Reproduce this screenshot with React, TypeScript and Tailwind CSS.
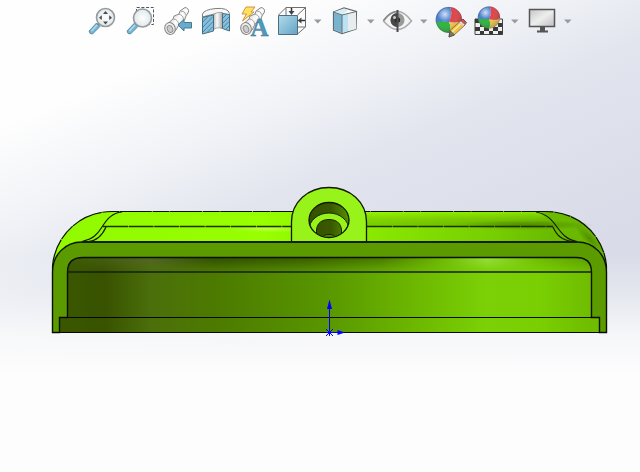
import React from 'react';

type ToolProps = { label: string; children: React.ReactNode };

/* Toolbar glyphs share a 38 by 38 drawing area. */
function Tool({ label, children }: ToolProps) {
  return (
    <button type="button" aria-label={label} title={label} className="h-[38px] w-[38px] shrink-0">
      <svg viewBox="0 0 38 38" className="block h-full w-full" fill="none" aria-hidden="true">
        {children}
      </svg>
    </button>
  );
}

function Drop({ label }: { label: string }) {
  return (
    <button type="button" aria-label={label} className="flex h-[38px] w-[15px] shrink-0 items-center pl-[3px]">
      <svg viewBox="0 0 8 5" className="block h-[5px] w-2" aria-hidden="true">
        <path d="M0 .5H7.5L3.8 4.5Z" fill="#999a9e" />
      </svg>
    </button>
  );
}

function Scope() {
  return (
    <>
      <path d="M7 23 L14 17 15 14 20 12 21 9 26 5.5Q30 6 29.500 10L27 14 25.500 18 21 21 17 28 13 31.500Z" fill="url(#metal)" stroke="#8b8b8b" />
      <path d="M14 17q5 0 6 6M19.500 12q5 1 5 6M22 9q4 0 5 4" stroke="#a5a5a5" />
      <ellipse cx="11" cy="26.500" rx="5.200" ry="6" transform="rotate(-20 11 26.500)" fill="#eee" stroke="#858585" />
      <ellipse cx="11" cy="27" rx="2.700" ry="3.600" transform="rotate(-20 11 27)" fill="#ccc" stroke="#8c8c8c" />
    </>
  );
}

function Ball({ cx, cy, r }: { cx: number; cy: number; r: number }) {
  return (
    <g transform={`translate(${cx} ${cy}) scale(${r / 13})`}>
      <path d="M0 2Q-7 1-13 3A13 13 0 0 1 1-13Q4-6 0 2Z" fill="#477ed0" />
      <path d="M1-13A13 13 0 0 1 13 1Q7 4 0 2Q4-6 1-13Z" fill="#df4348" />
      <path d="M-13 2Q-7 1 0 2Q3 8 0 13A13 13 0 0 1-13 2Z" fill="#2db33c" />
      <path d="M0 2Q7 4 13 1A13 13 0 0 1 0 13Q3 8 0 2Z" fill="#edc650" />
      <circle r="13" fill="url(#shine)" />
      <circle r="12.700" stroke="#555c65" strokeOpacity=".55" strokeWidth=".7" />
    </g>
  );
}

function Magnifier({ x, y, r }: { x: number; y: number; r: number }) {
  return (
    <>
      <path d={`M${x - r * 0.7} ${y + r * 0.7}l-3 3`} stroke="#6e8490" strokeWidth="3" />
      <path d="M6 29 13.500 21 17 24.500 9.500 32Q6.500 32.500 6 29Z" fill="#78b5d3" stroke="#467f9d" strokeWidth=".8" />
      <path d="M8.500 29 14 23" stroke="#b4deef" strokeWidth="1.300" />
      <circle cx={x} cy={y} r={r} fill="url(#lens)" stroke="#979b9e" strokeWidth="1.600" />
    </>
  );
}

function Toolbar() {
  return (
    <header className="flex h-[42px] items-center justify-center pl-[19px]">
      <svg className="absolute h-0 w-0" aria-hidden="true">
        <defs>
          <linearGradient id="metal" x1="0" y1="0" x2="1" y2="1"><stop offset=".1" stopColor="#aaa" /><stop offset=".5" stopColor="#fff" /><stop offset="1" stopColor="#aaa" /></linearGradient>
          <linearGradient id="bored" x1="0" x2="1"><stop stopColor="#bbb" /><stop offset=".4" stopColor="#fafafa" /><stop offset="1" stopColor="#a8a8a8" /></linearGradient>
          <radialGradient id="lens"><stop stopColor="#fff" /><stop offset="1" stopColor="#dfe8eb" /></radialGradient>
          <radialGradient id="shine" cx=".34" cy=".28" r=".7"><stop stopColor="#fff" stopOpacity=".75" /><stop offset=".42" stopColor="#fff" stopOpacity="0" /><stop offset="1" stopColor="#222" stopOpacity=".2" /></radialGradient>
          <linearGradient id="blueface" x1="0" y1="0" x2="1" y2="1"><stop stopColor="#b4dcea" /><stop offset="1" stopColor="#62a3c5" /></linearGradient>
          <linearGradient id="screen" x1="0" y1="0" x2="1" y2="1"><stop stopColor="#c5c5c5" /><stop offset=".5" stopColor="#eee" /><stop offset="1" stopColor="#bdbdbd" /></linearGradient>
        </defs>
      </svg>
      <Tool label="Zoom to Fit">
        <Magnifier x={22.500} y={15.500} r={9} />
        <path d="M22.500 9 25 12H20ZM22.500 22.500 25 19.500H20ZM16 15.700 18.800 13.300V18.100ZM29 15.700 26.200 13.300V18.100Z" fill="#4a4a4a" />
      </Tool>
      <Tool label="Zoom to Area">
        <path d="M15.500 10V5.500H32.500V22.500H28" stroke="#555" strokeDasharray="3 1.700" />
        <Magnifier x={21.500} y={16} r={9} />
      </Tool>
      <Tool label="Previous View">
        <Scope />
        <path d="M19 23 25 17.500V20.500H32.500V26H25V29Z" fill="#6babc9" stroke="#427b96" />
      </Tool>
      <Tool label="Section View">
        <path d="M5.500 15V12Q7 7.500 19 6.500T32.500 11.500V14L25 12H17Z" fill="#f7f7f7" stroke="#808080" />
        <path d="M16.500 13Q18 10 25.500 10.500V26.500Q19 24.500 16.500 28Z" fill="url(#bored)" stroke="#888" strokeWidth=".7" />
        <path d="M5.500 15.500 16.500 13V29L5.500 32ZM25.500 11.500 32.500 12.500V29L25.500 26.500Z" fill="#86bfdb" stroke="#446f83" />
        <path d="M6 20 10.500 15M6 25 16 14.500M6 30 16 19.500M10 30.500 16 24.500M26 16 29.500 12.500M26 21 32 15M26 25.500 32 19.500M29 27 32 24" stroke="#3f7f9f" strokeWidth=".9" />
      </Tool>
      <Tool label="Dynamic Annotation Views">
        <Scope />
        <path d="M11 5H20L16 10H19L7.500 19 11.500 12H7Z" fill="#ffe45b" stroke="#d4914b" />
        <text x="15.500" y="33.500" fill="#5099bb" stroke="#37718d" strokeWidth=".4" className="font-['Liberation_Serif',serif] text-[25px] font-bold">A</text>
      </Tool>
      <Tool label="View Orientation">
        <path d="M5.500 13 13 5.500H32.500V25L24.500 32M24.500 13 32.500 5.500M13 5.500V13M25 25H32.500" stroke="#707070" />
        <path d="M5.500 13.500H24.500V32.500H5.500Z" fill="url(#blueface)" stroke="#4b6f80" />
        <path d="M18.500 6V11M32 18.500H27" stroke="#333" strokeWidth="1.500" />
        <path d="M15.500 9H21.500L18.500 13ZM28.500 15.500V21.500L24.500 18.500Z" fill="#444" />
      </Tool>
      <Drop label="View Orientation options" />
      <Tool label="Display Style">
        <path d="M7.500 10 18 6 30.500 9.500 30 27 16 31.500 7.500 28Z" fill="#fff" stroke="#606b70" strokeWidth="1.200" />
        <path d="M8 10.500 16 13V31L8 27.500Z" fill="#78b3cf" />
        <path d="M16 13 22.500 11.500V29L16 31Z" fill="#bde1f0" />
        <path d="M8 10 18 6.500 22.500 8 16 13Z" fill="#d6edf6" />
        <path d="M23 12 30 10V27L23 29Z" fill="#e9ecee" />
        <path d="M7.500 10 16 13 30.500 9.500M16 13V31" stroke="#667176" />
      </Tool>
      <Drop label="Display Style options" />
      <Tool label="Hide/Show Items">
        <path d="M4.500 19Q18.500 0 32.500 19Q18.500 36 4.500 19Z" fill="#f4f4f4" stroke="#aaa" strokeWidth="1.500" />
        <path d="M4.500 18.500Q11 9.500 18.500 9.500" stroke="#888" strokeWidth="1.500" />
        <circle cx="18.500" cy="18" r="7" fill="#999" />
        <path d="M18.500 11A7 7 0 0 0 18.500 25Z" fill="#484848" />
        <circle cx="18.500" cy="18" r="2.700" fill="#2c2c2c" />
        <circle cx="15.500" cy="15.500" r="1.500" fill="#ccc" />
        <path d="M18.500 8V30" stroke="#4b4b4b" strokeWidth="2" />
      </Tool>
      <Drop label="Hide/Show Items options" />
      <Tool label="Edit Appearance">
        <Ball cx={17} cy={18} r={13} />
        <path d="M17 35 18 28.500 28 19.500 32 24 22 33Z" fill="#edc34a" stroke="#81622b" strokeWidth=".8" />
        <path d="M20 30 29.500 21" stroke="#ffe694" strokeWidth="1.500" />
        <path d="M27.500 20 31 17 34.500 20.500 32 24Z" fill="#cf5350" stroke="#655" />
        <path d="M28 20 32 23.500" stroke="#ddd" strokeWidth="2" />
        <path d="M17 35 18 28.500 22.500 33Z" fill="#777" stroke="#444" strokeWidth=".7" />
      </Tool>
      <Tool label="Apply Scene">
        <path d="M5 17H32.500V32.500H5Z" fill="#eee" stroke="#444" />
        <path d="M5 17h5v4H5zM10 21h4v4h-4zM5 25h5v4H5zM14 25h5v4h-5zM10 29h4v3.500h-4zM19 29h4v3.500h-4zM23 25h5v4h-5zM28 21h4.500v4H28zM23 17h5v4h-5zM28 29h4.500v3.500H28z" fill="#383838" />
        <Ball cx={19} cy={15.500} r={11} />
      </Tool>
      <Drop label="Apply Scene options" />
      <Tool label="View Settings">
        <path d="M6.500 7.500H31.500V24.500H6.500Z" fill="url(#screen)" stroke="#555" strokeWidth="1.500" />
        <path d="M17 25H22V28.500H25V30.500H14V28.500H17Z" fill="#555" />
      </Tool>
      <Drop label="View Settings options" />
    </header>
  );
}

function Model() {
  return (
    <svg viewBox="51 186 557 152" className="block h-[152px] w-[557px] shrink-0" fill="none" role="img" aria-label="Green housing, front view">
      <defs>
        <linearGradient id="shell" gradientUnits="userSpaceOnUse" x1="52" y1="0" x2="607" y2="0">
          <stop stopColor="#91fa00" /><stop offset=".38" stopColor="#97ff00" /><stop offset=".6" stopColor="#87e600" /><stop offset=".8" stopColor="#76cd00" /><stop offset=".9" stopColor="#6aba00" /><stop offset="1" stopColor="#69b800" />
        </linearGradient>
        <linearGradient id="bevel" x1="0" y1="0" x2="0" y2="1">
          <stop stopColor="#9cff00" stopOpacity=".6" /><stop offset="1" stopColor="#4a7a00" stopOpacity=".25" />
        </linearGradient>
        <linearGradient id="cavity" gradientUnits="userSpaceOnUse" x1="67" y1="0" x2="592" y2="0">
          <stop stopColor="#3a5700" /><stop offset=".07" stopColor="#385200" /><stop offset=".16" stopColor="#4b6f0b" /><stop offset=".28" stopColor="#4c7a00" /><stop offset=".49" stopColor="#589600" /><stop offset=".65" stopColor="#6bb500" /><stop offset=".8" stopColor="#7bd106" /><stop offset=".9" stopColor="#7acf03" /><stop offset="1" stopColor="#6fbc00" />
        </linearGradient>
        <linearGradient id="roof" gradientUnits="userSpaceOnUse" x1="67" y1="0" x2="592" y2="0">
          <stop stopColor="#3b5b00" /><stop offset=".16" stopColor="#55642a" /><stop offset=".28" stopColor="#304b00" /><stop offset=".45" stopColor="#375800" /><stop offset=".6" stopColor="#477500" /><stop offset=".72" stopColor="#70ba06" /><stop offset=".8" stopColor="#9adf40" /><stop offset=".89" stopColor="#72bd06" /><stop offset="1" stopColor="#589800" />
        </linearGradient>
        <linearGradient id="roofFade" x1="0" y1="0" x2="0" y2="1"><stop stopColor="#fff" /><stop offset="1" stopColor="#000" /></linearGradient>
        <mask id="roofMask"><path fill="url(#roofFade)" d="M67 257H592V272H67Z" /></mask>
        <linearGradient id="bore" gradientUnits="userSpaceOnUse" x1="309" y1="0" x2="349" y2="0"><stop stopColor="#355000" /><stop offset=".55" stopColor="#395900" /><stop offset="1" stopColor="#549100" /></linearGradient>
        <radialGradient id="glint"><stop stopColor="#c4ff48" /><stop offset="1" stopColor="#a4ff20" stopOpacity="0" /></radialGradient>
        <radialGradient id="shade"><stop stopColor="#447700" stopOpacity=".65" /><stop offset="1" stopColor="#447700" stopOpacity="0" /></radialGradient>
        <clipPath id="hole"><ellipse cx="329" cy="220" rx="20" ry="17.500" /></clipPath>
      </defs>

      {/* Rounded outer shell */}
      <path d="M52.500 272V266C55 236 80 211.500 112 211.500H546C579 211.500 604 236 606.500 266V272L577 242H82Z" fill="url(#shell)" />
      <path d="M367 212H540L553 227H367Z" fill="url(#bevel)" />
      <ellipse cx="525" cy="225" rx="70" ry="5" fill="url(#shade)" />
      <ellipse cx="267" cy="229" rx="45" ry="4" fill="url(#glint)" />
      <ellipse cx="590" cy="239" rx="20" ry="6" transform="rotate(46 590 239)" fill="url(#shade)" />
      <path d="M52.500 270V266C55 236 80 211.500 112 211.500H546C579 211.500 604 236 606.500 266V270" stroke="#0b1100" strokeWidth="1.200" strokeDasharray="32 .7 17 .5" />
      <path d="M103 226.500H291M367 226.500H553" stroke="#1d2e00" strokeWidth="1.400" strokeDasharray="25 .6" />
      <path d="M122 212C112 213 107 219 102 227S93 239 82 241.500M106 227C102 236 97 241 88 241.500M536 212C547 214 552 220 557 227S567 240 577 241.500M553 227C557 236 562 240 572 241.500" stroke="#131f00" strokeWidth="1.200" />

      {/* Mounting lug and counterbored hole */}
      <path d="M291.500 242V222C291.500 202 308 187.500 329 187.500S366.500 202 366.500 222V242Z" fill="#98f31b" stroke="#111900" strokeWidth="1.300" />
      <ellipse cx="329" cy="220" rx="20" ry="17.500" fill="url(#bore)" />
      <g clipPath="url(#hole)">
        <ellipse cx="329" cy="230" rx="20" ry="17" fill="#98f31b" stroke="#182300" />
        <path d="M316.500 240V230C317 223 322 219.500 329 219.500S341 223 341.500 230V240Z" fill="url(#bore)" stroke="#182300" />
        <ellipse cx="329" cy="237" rx="6" ry="2.500" fill="#549100" stroke="#182300" />
      </g>
      <ellipse cx="329" cy="220" rx="20" ry="17.500" stroke="#111900" strokeWidth="1.300" />

      {/* Interior and cut face */}
      <path d="M60 332V317H67V270Q67 257 83 257H576Q592 257 592 272V317H599V332Z" fill="url(#cavity)" />
      <path d="M67 272V271Q67 257 83 257H576Q592 257 592 271V272Z" fill="url(#roof)" mask="url(#roofMask)" />
      <path fillRule="evenodd" d="M52.500 332.500V272C52.500 255 65 242 82 242H577C594 242 606.500 255 606.500 272V332.500H599.500V317.500H591.500V272Q591.500 257.500 576 257.500H83Q67.500 257.500 67.500 272V317.500H59.500V332.500Z" fill="#5b9b00" stroke="#0b1100" strokeWidth="1.400" />
      <path d="M82 242H577" stroke="#142000" strokeWidth="1.800" />
      <path d="M67.500 272H591.500" stroke="#142000" strokeWidth="1.700" />
      <path d="M59.500 317.500H599.500M52 332.500H607" stroke="#050800" />

      {/* Origin triad */}
      <path d="M329.500 332.500V303M329.500 332.500H340M326 329 333 336M326 336 333 329M329.500 329V336M326 332.500H333" stroke="#00f" />
      <path d="M329.500 299.500 332 309H327ZM345 332.500 337.500 330V335Z" fill="#00f" />
    </svg>
  );
}

export default function App() {
  return (
    <div className="min-h-screen bg-[linear-gradient(180deg,transparent_54%,rgba(253,253,253,.32)_62%,rgba(253,253,253,.8)_71%,#fdfdfd_80%),linear-gradient(157deg,#fefefe_17%,#f1f3f7_30%,#e2e5ee_42%,#d9dce8_66%)] font-['Liberation_Sans',sans-serif]">
      <Toolbar />
      <main className="flex justify-center pt-36 pl-[19px]">
        <Model />
      </main>
    </div>
  );
}
